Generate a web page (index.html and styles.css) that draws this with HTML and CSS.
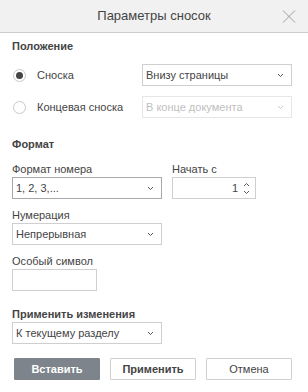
FILE: index.html
```html
<!DOCTYPE html>
<html lang="ru">

<head>
    <meta charset="UTF-8">
    <meta name="viewport" content="width=device-width, initial-scale=1.0">
    <title>Параметры сносок</title>
    <link rel="stylesheet" href="styles.css">
</head>

<body>
    <div class="dialog">
        <header class="dialog-header">
            <span class="dialog-title">Параметры сносок</span>
            <span class="close-button">
                <svg width="14" height="13" viewBox="0 0 14 13">
                    <path d="M1 0.5 L13 12.5 M13 0.5 L1 12.5" stroke="#a0a0a0" stroke-width="1" fill="none" />
                </svg>
            </span>
        </header>

        <div class="dialog-body">
            <div class="section-title first">Положение</div>

            <div class="radio-row">
                <label class="radio checked"><span class="radio-circle"></span>Сноска</label>
                <div class="select">
                    <span>Внизу страницы</span>
                    <svg class="chevron" width="7" height="5" viewBox="0 0 7 5"><path d="M1 1 L3.5 3.5 L6 1" stroke="#555" fill="none" /></svg>
                </div>
            </div>

            <div class="radio-row">
                <label class="radio"><span class="radio-circle"></span>Концевая сноска</label>
                <div class="select disabled">
                    <span>В конце документа</span>
                    <svg class="chevron" width="7" height="5" viewBox="0 0 7 5"><path d="M1 1 L3.5 3.5 L6 1" stroke="#c8c8c8" fill="none" /></svg>
                </div>
            </div>

            <div class="section-title format-title">Формат</div>

            <div class="format-row">
                <div class="field">
                    <div class="field-label">Формат номера</div>
                    <div class="select wide focused">
                        <span>1, 2, 3,...</span>
                        <svg class="chevron" width="7" height="5" viewBox="0 0 7 5"><path d="M1 1 L3.5 3.5 L6 1" stroke="#555" fill="none" /></svg>
                    </div>
                </div>
                <div class="field">
                    <div class="field-label">Начать с</div>
                    <div class="spinner">
                        <span class="spinner-value">1</span>
                        <span class="spinner-arrows">
                            <svg width="7" height="5" viewBox="0 0 7 5"><path d="M1 4 L3.5 1.5 L6 4" stroke="#555" fill="none" /></svg>
                            <svg width="7" height="5" viewBox="0 0 7 5"><path d="M1 1 L3.5 3.5 L6 1" stroke="#555" fill="none" /></svg>
                        </span>
                    </div>
                </div>
            </div>

            <div class="field spaced">
                <div class="field-label">Нумерация</div>
                <div class="select wide">
                    <span>Непрерывная</span>
                    <svg class="chevron" width="7" height="5" viewBox="0 0 7 5"><path d="M1 1 L3.5 3.5 L6 1" stroke="#555" fill="none" /></svg>
                </div>
            </div>

            <div class="field spaced">
                <div class="field-label">Особый символ</div>
                <div class="text-input"></div>
            </div>

            <div class="section-title apply-title">Применить изменения</div>
            <div class="select wide">
                <span>К текущему разделу</span>
                <svg class="chevron" width="7" height="5" viewBox="0 0 7 5"><path d="M1 1 L3.5 3.5 L6 1" stroke="#555" fill="none" /></svg>
            </div>

            <div class="buttons">
                <button class="btn primary">Вставить</button>
                <button class="btn bold">Применить</button>
                <button class="btn">Отмена</button>
            </div>
        </div>
    </div>
</body>

</html>
```

FILE: styles.css
```css
* {
    margin: 0;
    padding: 0;
    box-sizing: border-box;
}

body {
    font-family: "Liberation Sans", Arial, sans-serif;
    font-size: 11px;
    color: #444;
    background: #fff;
}

.dialog {
    width: 308px;
    height: 392px;
}

.dialog-header {
    position: relative;
    height: 33px;
    background-color: #f1f1f1;
    border-bottom: 1px solid #cbcbcb;
    text-align: center;
}

.dialog-title {
    font-size: 13px;
    line-height: 32px;
    color: #444;
}

.close-button {
    position: absolute;
    top: 10px;
    right: 12px;
    display: flex;
}

.dialog-body {
    padding: 0 16px 0 12px;
}

.section-title {
    font-weight: bold;
    line-height: 14px;
}

.section-title.first {
    margin-top: 6px;
    margin-bottom: 11px;
}

.format-title {
    margin-top: 19px;
    margin-bottom: 11px;
}

.apply-title {
    margin-top: 16px;
    margin-bottom: 1px;
}

.radio-row {
    display: flex;
    align-items: center;
    height: 22px;
    margin-bottom: 10px;
}

.radio {
    width: 130px;
    display: flex;
    align-items: center;
    gap: 11px;
    padding-left: 1px;
}

.radio-circle {
    width: 13px;
    height: 13px;
    border: 1px solid #c8c8c8;
    border-radius: 50%;
    display: flex;
    align-items: center;
    justify-content: center;
}

.radio.checked .radio-circle::after {
    content: "";
    width: 7px;
    height: 7px;
    border-radius: 50%;
    background: #444;
}

.select {
    flex: 1;
    height: 22px;
    border: 1px solid #cfcfcf;
    display: flex;
    align-items: center;
    justify-content: space-between;
    padding: 0 7px 0 3px;
    background: #fff;
}

.select.wide {
    width: 150px;
    flex: none;
}

.select.focused {
    border-color: #a8a8a8;
}

.select.disabled {
    border-color: #e6e6e6;
    color: #c0c0c0;
}

.format-row {
    display: flex;
    gap: 10px;
}

.field-label {
    line-height: 14px;
    margin-bottom: 1px;
}

.field.spaced {
    margin-top: 9px;
}

.spinner {
    width: 84px;
    height: 22px;
    border: 1px solid #cfcfcf;
    display: flex;
    align-items: center;
    justify-content: flex-end;
    padding-right: 5px;
    gap: 5px;
}

.spinner-arrows {
    display: flex;
    flex-direction: column;
    gap: 3px;
}

.spinner-arrows svg {
    display: block;
}

.text-input {
    width: 85px;
    height: 22px;
    border: 1px solid #cfcfcf;
}

.buttons {
    display: flex;
    gap: 10px;
    margin-top: 14px;
    padding-left: 2px;
}

.btn {
    width: 86px;
    height: 22px;
    font-family: inherit;
    font-size: 11px;
    color: #444;
    background: #fff;
    border: 1px solid #cfcfcf;
    border-radius: 1px;
}

.btn.bold {
    font-weight: bold;
}

.btn.primary {
    background-color: #7d848b;
    border-color: #7d848b;
    color: #fff;
    font-weight: bold;
}
```
